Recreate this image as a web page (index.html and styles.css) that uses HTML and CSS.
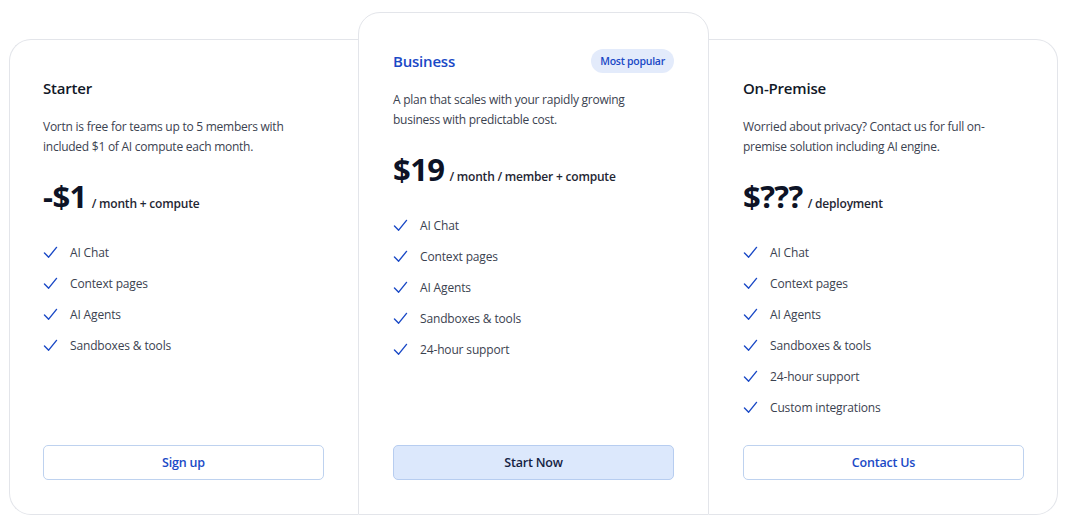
FILE: index.html
```html
<!DOCTYPE html>
<html lang="en">
<head>
<meta charset="utf-8">
<title>Pricing</title>
<link rel="stylesheet" href="styles.css">
</head>
<body>
<main class="plans">
  <section class="card side left">
    <div class="head"><h2 class="title">Starter</h2></div>
    <p class="desc">Vortn is free for teams up to 5 members with included $1 of AI compute each month.</p>
    <div class="price"><span class="amount">-$1</span><span class="unit">/ month + compute</span></div>
    <ul class="features">
      <li><svg class="check" viewBox="0 0 16 14"><path d="M1.5 7.5 L6 12 L14.5 1.5"/></svg>AI Chat</li>
      <li><svg class="check" viewBox="0 0 16 14"><path d="M1.5 7.5 L6 12 L14.5 1.5"/></svg>Context pages</li>
      <li><svg class="check" viewBox="0 0 16 14"><path d="M1.5 7.5 L6 12 L14.5 1.5"/></svg>AI Agents</li>
      <li><svg class="check" viewBox="0 0 16 14"><path d="M1.5 7.5 L6 12 L14.5 1.5"/></svg>Sandboxes &amp; tools</li>
    </ul>
    <button class="btn">Sign up</button>
  </section>
  <section class="card featured">
    <div class="head"><h2 class="title blue">Business</h2><span class="badge">Most popular</span></div>
    <p class="desc">A plan that scales with your rapidly growing business with predictable cost.</p>
    <div class="price"><span class="amount">$19</span><span class="unit">/ month / member + compute</span></div>
    <ul class="features">
      <li><svg class="check" viewBox="0 0 16 14"><path d="M1.5 7.5 L6 12 L14.5 1.5"/></svg>AI Chat</li>
      <li><svg class="check" viewBox="0 0 16 14"><path d="M1.5 7.5 L6 12 L14.5 1.5"/></svg>Context pages</li>
      <li><svg class="check" viewBox="0 0 16 14"><path d="M1.5 7.5 L6 12 L14.5 1.5"/></svg>AI Agents</li>
      <li><svg class="check" viewBox="0 0 16 14"><path d="M1.5 7.5 L6 12 L14.5 1.5"/></svg>Sandboxes &amp; tools</li>
      <li><svg class="check" viewBox="0 0 16 14"><path d="M1.5 7.5 L6 12 L14.5 1.5"/></svg>24-hour support</li>
    </ul>
    <button class="btn primary">Start Now</button>
  </section>
  <section class="card side right">
    <div class="head"><h2 class="title">On-Premise</h2></div>
    <p class="desc">Worried about privacy? Contact us for full on-premise solution including AI engine.</p>
    <div class="price"><span class="amount">$???</span><span class="unit">/ deployment</span></div>
    <ul class="features">
      <li><svg class="check" viewBox="0 0 16 14"><path d="M1.5 7.5 L6 12 L14.5 1.5"/></svg>AI Chat</li>
      <li><svg class="check" viewBox="0 0 16 14"><path d="M1.5 7.5 L6 12 L14.5 1.5"/></svg>Context pages</li>
      <li><svg class="check" viewBox="0 0 16 14"><path d="M1.5 7.5 L6 12 L14.5 1.5"/></svg>AI Agents</li>
      <li><svg class="check" viewBox="0 0 16 14"><path d="M1.5 7.5 L6 12 L14.5 1.5"/></svg>Sandboxes &amp; tools</li>
      <li><svg class="check" viewBox="0 0 16 14"><path d="M1.5 7.5 L6 12 L14.5 1.5"/></svg>24-hour support</li>
      <li><svg class="check" viewBox="0 0 16 14"><path d="M1.5 7.5 L6 12 L14.5 1.5"/></svg>Custom integrations</li>
    </ul>
    <button class="btn">Contact Us</button>
  </section>
</main>
</body>
</html>
```

FILE: styles.css
```css
* { box-sizing: border-box; }
html, body { margin: 0; padding: 0; background: #ffffff; }
body {
  font-family: "Open Sans", "Noto Sans", sans-serif;
  color: #374151;
  width: 1070px;
  height: 515px;
  overflow: hidden;
}
.plans {
  display: flex;
  align-items: flex-end;
  padding: 0 0 0 9px;
  height: 515px;
}
.card {
  display: flex;
  flex-direction: column;
  background: #fff;
  border: 1px solid #e3e5ea;
  padding: 36px 34px 34px 34px;
}
.side {
  height: 476px;
}
.side.left {
  width: 349px;
  border-right: 0;
  border-radius: 22px 0 0 22px;
  padding-left: 33px;
}
.side.right {
  width: 349px;
  border-left: 0;
  border-radius: 0 22px 22px 0;
}
.featured {
  width: 351px;
  height: 503px;
  border-radius: 22px 22px 0 0;
}
.head {
  display: flex;
  align-items: center;
  justify-content: space-between;
  height: 24px;
}
.title {
  margin: 0;
  font-size: 15px;
  font-weight: 600;
  color: #111827;
  letter-spacing: -0.2px;
}
.title.blue { color: #1a49c6; }
.badge {
  background: #e3ebfb;
  color: #1a49c6;
  font-size: 10.5px;
  font-weight: 600;
  letter-spacing: -0.25px;
  height: 24px;
  line-height: 24px;
  padding: 0 9px;
  border-radius: 12px;
}
.desc {
  margin: 17px 0 0;
  font-size: 12px;
  line-height: 20px;
  letter-spacing: -0.25px;
  color: #3b4250;
}
.price {
  margin-top: 21px;
  display: flex;
  align-items: baseline;
  height: 36px;
}
.amount {
  font-size: 31px;
  line-height: 36px;
  font-weight: 700;
  color: #0d1326;
  letter-spacing: -0.6px;
  margin-right: 5px;
}
.unit {
  font-size: 12px;
  font-weight: 600;
  letter-spacing: -0.2px;
  color: #1f2633;
}
.features {
  list-style: none;
  margin: 28px 0 0;
  padding: 0;
  display: flex;
  flex-direction: column;
  gap: 11px;
}
.features li {
  display: flex;
  align-items: center;
  height: 20px;
  font-size: 12px;
  letter-spacing: -0.15px;
  color: #3b4250;
}
.check {
  width: 15px;
  height: 13px;
  margin-right: 12px;
  fill: none;
  stroke: #1a49c6;
  stroke-width: 1.5;
  stroke-linecap: round;
  stroke-linejoin: round;
}
.btn {
  margin-top: auto;
  height: 35px;
  width: 281px;
  border: 1px solid #bed2ef;
  background: #fff;
  border-radius: 5px;
  font-family: inherit;
  font-size: 12.5px;
  font-weight: 600;
  letter-spacing: -0.2px;
  color: #1a49c6;
}
.btn.primary {
  background: #dce8fc;
  border-color: #b7cdf0;
  color: #152343;
}
```
